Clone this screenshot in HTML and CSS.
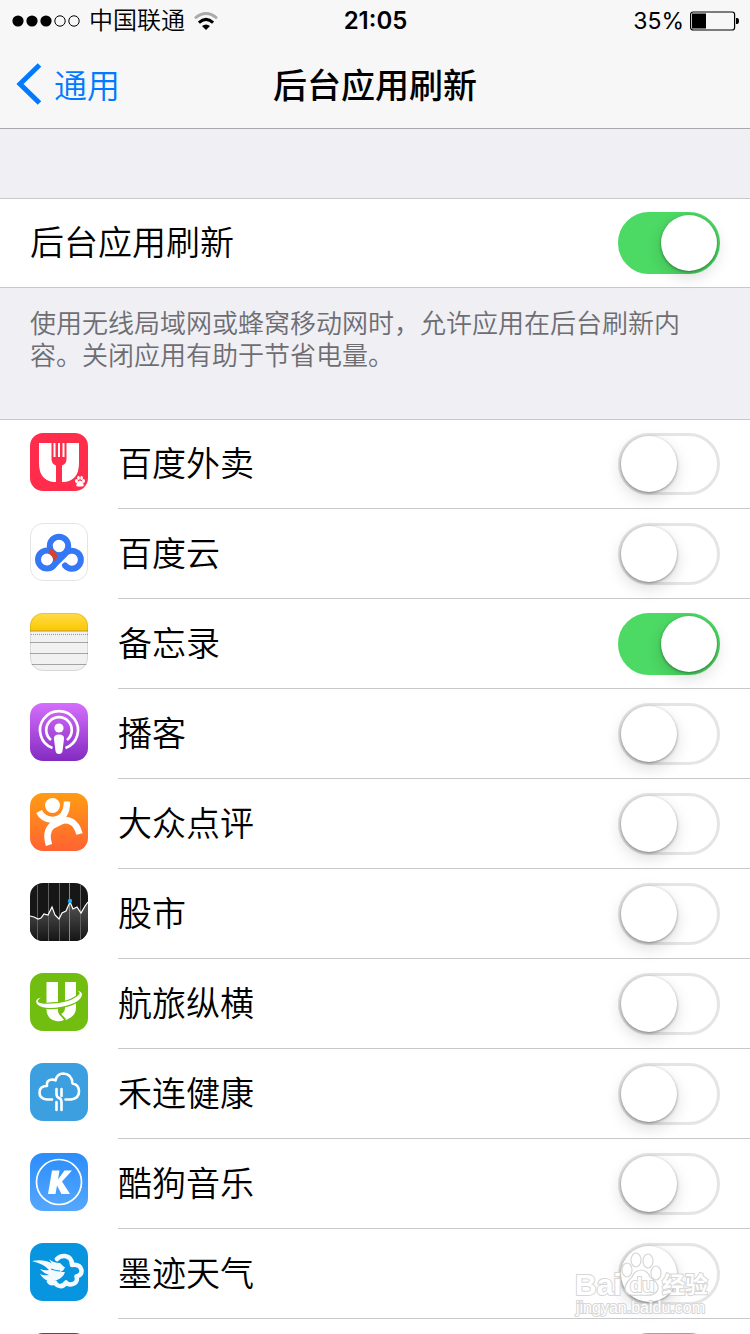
FILE: index.html
```html
<!DOCTYPE html>
<html lang="zh-CN">
<head>
<meta charset="utf-8">
<meta name="viewport" content="width=device-width, initial-scale=1">
<title>后台应用刷新</title>
<link rel="stylesheet" href="styles.css">
</head>
<body>
<div class="screen">
  <header class="top">
    <div class="status">
      <div class="status-left">
        <svg class="signal" viewBox="0 0 68 12" aria-hidden="true"><circle cx="6" cy="6" r="5.6"/><circle cx="20" cy="6" r="5.6"/><circle cx="34" cy="6" r="5.6"/><g fill="none" stroke="#000"><circle cx="48" cy="6" r="5.2"/><circle cx="62" cy="6" r="5.2"/></g></svg>
        <span>中国联通</span>
        <svg class="wifi" viewBox="0 0 24 18" aria-hidden="true"><path d="M12 18l-4-4q4-3 8 0z"/><path d="M4.9 10.6Q12 4.200 19.100 10.600" fill="none" stroke="#000" stroke-width="3"/><path d="M1 6.200Q12-3.200 23 6.200" fill="none" stroke="#aaa" stroke-width="2.800"/></svg>
      </div>
      <time class="clock">21:05</time>
      <div class="status-right">
        <span class="percent">35%</span>
        <svg class="battery" viewBox="0 0 49 20" aria-hidden="true"><rect x=".6" y="1" width="44" height="18" rx="2.500" fill="none" stroke="#000" stroke-width="1.200"/><rect x="2" y="2.500" width="14" height="15"/><path d="M46 7h1q2 0 2 3t-2 3h-1z"/></svg>
      </div>
    </div>
    <nav class="nav">
      <a class="back" href="#"><svg viewBox="0 0 26 42" aria-hidden="true"><path d="M23.500 2L4 21l19.500 19" fill="none" stroke="#007aff" stroke-width="5"/></svg>通用</a>
      <h1 class="title">后台应用刷新</h1>
    </nav>
  </header>

  <main>
    <div class="group">
      <div class="row"><label class="name" for="all">后台应用刷新</label><input class="switch" id="all" type="checkbox" checked></div>
    </div>
    <p class="note">使用无线局域网或蜂窝移动网时，允许应用在后台刷新内容。关闭应用有助于节省电量。</p>

    <ul class="group apps">
      <li class="row">
        <svg class="icon" viewBox="0 0 58 58" aria-hidden="true"><rect width="58" height="58" rx="13" fill="#ff2d4b"/><path d="M9 10h40v20q0 17-14 19H23Q9 47 9 30z" fill="#fff"/><path d="M21.500 9h15v17q0 5-4.500 6.500V50h-6V32.500q-4.500-1.500-4.500-6.500z" fill="#ff2d4b"/><path d="M24.500 10v14M29 10v14M33.500 10v14" stroke="#fff" stroke-width="2"/><g fill="#fff"><ellipse cx="46.500" cy="48" rx="1.500" ry="2"/><ellipse cx="48.500" cy="45" rx="1.400" ry="2"/><ellipse cx="51.600" cy="45" rx="1.400" ry="2"/><ellipse cx="53.500" cy="48" rx="1.500" ry="2"/><path d="M50 47.500q2 0 3 2.500 2 4-1.500 3.500h-3q-3.500.500-1.500-3.500 1-2.500 3-2.500z"/></g></svg>
        <div class="cell"><label class="name" for="a1">百度外卖</label><input class="switch" id="a1" type="checkbox"></div>
      </li>
      <li class="row">
        <svg class="icon" viewBox="0 0 58 58" aria-hidden="true"><rect x=".5" y=".5" width="57" height="57" rx="12.500" fill="#fff" stroke="#e4e4e4"/><g fill="none" stroke="#3478f6" stroke-width="6"><circle cx="29" cy="23" r="9.200"/><circle cx="17" cy="36.500" r="9"/><path d="M22 44L34.500 31.500a9 9 0 1 1 .500 11" stroke-linecap="round"/></g><path d="M19.500 25q6.500 3 8.300 9l-4 4.500q-.300-5.500-5.300-8z" fill="#d8432f"/></svg>
        <div class="cell"><label class="name" for="a2">百度云</label><input class="switch" id="a2" type="checkbox"></div>
      </li>
      <li class="row">
        <svg class="icon" viewBox="0 0 58 58" aria-hidden="true"><defs><linearGradient id="gy" x2="0" y2="1"><stop stop-color="#ffdc4a"/><stop offset="1" stop-color="#fdc800"/></linearGradient><clipPath id="cn"><rect width="58" height="58" rx="13"/></clipPath></defs><g clip-path="url(#cn)"><rect width="58" height="58" fill="#f1f1f1"/><rect width="58" height="18" fill="url(#gy)"/><path d="M0 18h58" stroke="#b99a2c"/><path d="M1 21.500h57" stroke="#999" stroke-dasharray="1 1"/><path d="M0 29.500h58M0 40.500h58M0 51.500h58" stroke="#a4a4a4"/></g><rect x=".5" y=".5" width="57" height="57" rx="12.500" fill="none" stroke="#000" stroke-opacity=".1"/></svg>
        <div class="cell"><label class="name" for="a3">备忘录</label><input class="switch" id="a3" type="checkbox" checked></div>
      </li>
      <li class="row">
        <svg class="icon" viewBox="0 0 58 58" aria-hidden="true"><defs><linearGradient id="gp" x2="0" y2="1"><stop stop-color="#d56efc"/><stop offset="1" stop-color="#832bc1"/></linearGradient></defs><rect width="58" height="58" rx="13" fill="url(#gp)"/><g fill="none" stroke="#fff" stroke-width="2.700"><path d="M22.500 45A19 19 0 1 1 35.500 45"/><path d="M21 37A12.800 12.800 0 1 1 37 37"/></g><circle cx="29" cy="25" r="4.600" fill="#fff"/><path d="M29 31.500q5.500 0 5 4.500l-1.500 12q-.500 3-3.500 3t-3.500-3L24 36q-.500-4.500 5-4.500z" fill="#fff"/></svg>
        <div class="cell"><label class="name" for="a4">播客</label><input class="switch" id="a4" type="checkbox"></div>
      </li>
      <li class="row">
        <svg class="icon" viewBox="0 0 58 58" aria-hidden="true"><defs><linearGradient id="go" x2="0" y2="1"><stop stop-color="#ff9c12"/><stop offset="1" stop-color="#ff6332"/></linearGradient></defs><rect width="58" height="58" rx="13" fill="url(#go)"/><circle cx="22.500" cy="12.500" r="7.500" fill="#fff"/><g fill="none" stroke="#fff" stroke-width="6.500"><path d="M9 18.500q4 8 14 8.500 14-1 14-18.500"/><path d="M19 52q-4-13 3-19.500Q32 24 42 29q5 3 7.500 12"/></g><path d="M22 26l13-4 4 6-16 8z" fill="#fff"/></svg>
        <div class="cell"><label class="name" for="a5">大众点评</label><input class="switch" id="a5" type="checkbox"></div>
      </li>
      <li class="row">
        <svg class="icon" viewBox="0 0 58 58" aria-hidden="true"><defs><linearGradient id="gs" x2="0" y2="1"><stop stop-color="#555"/><stop offset="1" stop-color="#151515"/></linearGradient><clipPath id="cs"><rect width="58" height="58" rx="13"/></clipPath></defs><g clip-path="url(#cs)"><rect width="58" height="58" fill="#161616"/><path d="M0 33l4 1 4 2 3-1 3-4 4 1 4-8 3 8 4 4 3-6 4-2 4-9 3 7 4-2 4 6 4-7 3-4v39H0z" fill="url(#gs)"/><path d="M7.500 0v58M18.500 0v58M29.500 0v58M50.500 0v58" stroke="#606060"/><path d="M39.500 0v58" stroke="#1badf8"/><path d="M0 33l4 1 4 2 3-1 3-4 4 1 4-8 3 8 4 4 3-6 4-2 4-9 3 7 4-2 4 6 4-7 3-4" fill="none" stroke="#fff" stroke-width="1.200"/><circle cx="40" cy="18" r="2.200" fill="#1badf8"/></g></svg>
        <div class="cell"><label class="name" for="a6">股市</label><input class="switch" id="a6" type="checkbox"></div>
      </li>
      <li class="row">
        <svg class="icon" viewBox="0 0 58 58" aria-hidden="true"><rect width="58" height="58" rx="13" fill="#71be10"/><path d="M16.500 9H28v28q0 4 3 6l3 4q-4 2-8 1-9.500-2-9.500-12zM35 9h11v26q0 8-10 12l-5-6q4-2 4-6z" fill="#fff"/><path d="M29.500 39q1 4 6 7" fill="none" stroke="#71be10" stroke-width="1.400"/><path d="M11 24.500Q4 26 7 31q6 6.500 26 2.500 18-4 19-12 0-3-5-4 4 2 2 4-5 6-20 8.500-18 2-21-1-1-2 3-4.500z" fill="#fff" stroke="#71be10" stroke-width="2.400" paint-order="stroke"/></svg>
        <div class="cell"><label class="name" for="a7">航旅纵横</label><input class="switch" id="a7" type="checkbox"></div>
      </li>
      <li class="row">
        <svg class="icon" viewBox="0 0 58 58" aria-hidden="true"><rect width="58" height="58" rx="13" fill="#3b9fe0"/><g fill="none" stroke="#fff" stroke-width="2.600" stroke-linecap="round" stroke-linejoin="round"><path d="M22 36.500h-5Q9.500 36 9.500 29.500T17 23q-1-6 5-6.500 2 0 3.500 1Q27 10.500 33.500 10.500 42 11 42.500 20.500q6.500 1 6.500 8t-8 8h-5.500"/><path d="M26.500 26v5q0 3 2.500 4t2.500 4v8M31.500 26v7M26.500 39v8"/></g></svg>
        <div class="cell"><label class="name" for="a8">禾连健康</label><input class="switch" id="a8" type="checkbox"></div>
      </li>
      <li class="row">
        <svg class="icon" viewBox="0 0 58 58" aria-hidden="true"><defs><linearGradient id="gk" x2="0" y2="1"><stop stop-color="#2b8dfb"/><stop offset="1" stop-color="#55a7fd"/></linearGradient></defs><rect width="58" height="58" rx="13" fill="url(#gk)"/><circle cx="29" cy="29" r="22.500" fill="none" stroke="#fff" stroke-width="1.700"/><path d="M22 17.500h7.500l-1.500 9 6.500-9H42L32 28.500l8 12.500h-8.500L27 32.500l-1.500 8.500H18z" fill="#fff"/></svg>
        <div class="cell"><label class="name" for="a9">酷狗音乐</label><input class="switch" id="a9" type="checkbox"></div>
      </li>
      <li class="row">
        <svg class="icon" viewBox="0 0 58 58" aria-hidden="true"><rect width="58" height="58" rx="13" fill="#0795e0"/><path d="M27 16q3-3.500 8-3 7 1 7 9 8-1 9.500 5 .500 5-5 6.500 2 7-6 8-3 0-4.500-2-3 5-8 3-2-1-3-3-4 2-6-1" fill="none" stroke="#f3fafe" stroke-width="4.500" stroke-linecap="round" stroke-linejoin="round"/><path d="M2 18q12-2 19 2 6 4 14 4-1 4-5 5h5q-2 6-8 8-5 2-9 1-5-2-8-7 4 2 9 1-6-2-9-6 5 2 9 1-5-6-17-9zM19 16q4 4 11 4l4 4q-12 0-15-8z" fill="#f3fafe"/><path d="M21 26q5 2 9 2" fill="none" stroke="#0795e0"/></svg>
        <div class="cell"><label class="name" for="a10">墨迹天气</label><input class="switch" id="a10" type="checkbox"></div>
      </li>
      <li class="row">
        <svg class="icon" viewBox="0 0 58 58" aria-hidden="true"><rect width="58" height="58" rx="13" fill="#d0104c"/></svg>
        <div class="cell"><span class="name"></span><input class="switch" type="checkbox" checked aria-label="应用"></div>
      </li>
    </ul>
  </main>

  <svg class="watermark" viewBox="0 0 140 84" aria-hidden="true">
    <g fill="#fff" fill-opacity=".8" stroke="#d6d6d6" stroke-width="1.200">
      <ellipse cx="53" cy="20" rx="5" ry="7"/><ellipse cx="62" cy="10" rx="5" ry="7"/><ellipse cx="74" cy="11" rx="5" ry="7"/><ellipse cx="82" cy="23" rx="5" ry="7"/>
      <path d="M67 20q6 0 9 7 9 6 8 12-2 8-17 6-15 2-16-6 0-6 7-12 3-7 9-7z"/>
    </g>
    <g class="mark" paint-order="stroke">
      <text class="mark-big" x="1" y="45">Bai</text><text class="mark-du" x="56" y="42">du</text><text class="mark-cjk" x="88" y="43">经验</text><text class="mark-url" x="2" y="63">jingyan.baidu.com</text>
    </g>
  </svg>
</div>
</body>
</html>
```
FILE: styles.css
```css
* { box-sizing: border-box; }

body {
  margin: 0;
  background: #efeff4;
  color: #000;
  font-family: Inter, "Noto Sans CJK SC DemiLight", "Noto Sans CJK SC", sans-serif;
}

.screen {
  position: relative;
  height: 100vh;
  overflow: hidden;
}

.top {
  background: #f7f7f7;
  border-bottom: 1px solid #a9a9ab;
}

.status {
  display: grid;
  grid-template-columns: 1fr auto 1fr;
  align-items: center;
  height: 42px;
  padding: 0 11px 0 12px;
  font-size: 24px;
  line-height: 42px;
}

.status-left, .status-right {
  display: flex;
  align-items: center;
}

.status-left { gap: 9px; }
.status-right { justify-content: flex-end; gap: 6px; }
.clock { font-weight: 600; }
.percent { font-size: 23px; }
.signal { width: 68px; height: 12px; }
.wifi { width: 24px; height: 18px; }
.battery { width: 49px; height: 20px; }

.nav {
  display: grid;
  grid-template-columns: 1fr auto 1fr;
  align-items: center;
  height: 86px;
  padding: 0 16px 3px;
}

.back {
  display: flex;
  align-items: center;
  gap: 12px;
  color: #007aff;
  font-size: 33px;
  text-decoration: none;
}

.back svg { width: 26px; height: 42px; }

.title {
  margin: 0;
  font-family: "Noto Sans CJK SC", sans-serif;
  font-size: 34px;
  font-weight: 500;
  line-height: 48px;
}

.group {
  margin: 69px 0 0;
  padding: 0;
  border-top: 1px solid #c8c7cc;
  background: #fff;
  list-style: none;
}

.row {
  display: flex;
  align-items: center;
  height: 90px;
  padding-left: 30px;
}

.row:first-child { height: 89px; }

.group > div.row {
  padding-right: 30px;
  border-bottom: 1px solid #c8c7cc;
}

.note {
  margin: 0;
  padding: 20px 60px 0 30px;
  color: #6d6d72;
  font-size: 26px;
  line-height: 32px;
}

.apps { margin-top: 47px; }

.icon {
  flex: none;
  width: 58px;
  height: 58px;
  margin: 0 30px 4px 0;
}

.row:first-child .icon { margin-bottom: 5px; }

.cell {
  display: flex;
  flex: 1;
  align-items: center;
  align-self: stretch;
  padding-right: 30px;
  border-bottom: 1px solid #c8c7cc;
}

.name {
  flex: 1;
  font-size: 34px;
  line-height: 48px;
}

.switch {
  flex: none;
  width: 102px;
  height: 62px;
  margin: 0;
  border: 3px solid #e5e5e5;
  border-radius: 31px;
  background: #fff;
  appearance: none;
}

.switch::before {
  content: "";
  display: block;
  width: 56px;
  height: 56px;
  border-radius: 50%;
  background: #fff;
  box-shadow: 0 1px 3px rgba(0, 0, 0, .4), 0 6px 16px rgba(0, 0, 0, .15);
}

.switch:checked {
  border-color: #4cd964;
  background: #4cd964;
}

.switch:checked::before { margin-left: 40px; }

.watermark {
  position: absolute;
  right: 36px;
  bottom: 0;
  width: 140px;
  height: 84px;
  overflow: visible;
  pointer-events: none;
}

.mark {
  fill: #fff;
  stroke: #d6d6d6;
  stroke-width: 2px;
  font-family: "Liberation Sans", "Noto Sans CJK SC", sans-serif;
}

.mark-big { font-size: 30px; font-weight: 700; }
.mark-du { font-size: 20px; font-weight: 700; }
.mark-cjk { font-size: 23px; font-weight: 700; }
.mark-url { font-size: 16px; }
```
